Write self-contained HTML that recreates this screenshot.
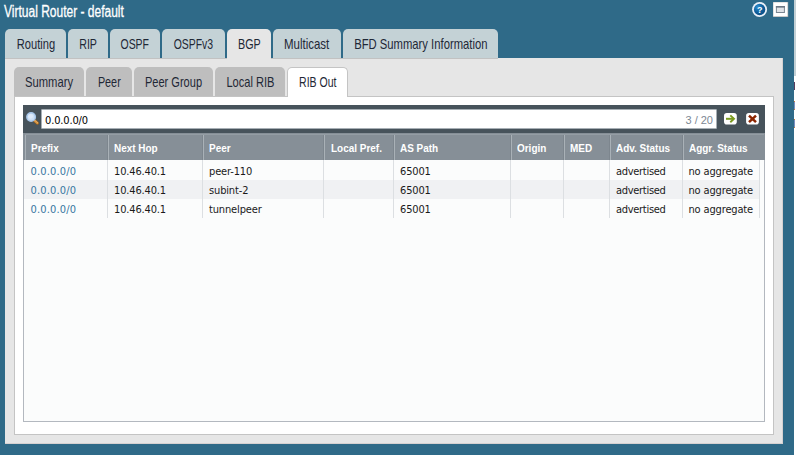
<!DOCTYPE html>
<html lang="en">
<head>
<meta charset="utf-8">
<title>Virtual Router - default</title>
<style>
html,body{margin:0;padding:0;}
body{width:796px;height:455px;overflow:hidden;background:#2f6a88;position:relative;font-family:"Liberation Sans",sans-serif;}
.abs{position:absolute;}
.cond{display:inline-block;transform-origin:0 50%;white-space:nowrap;}
#title{left:4px;top:1.6px;height:20px;line-height:20px;color:#fff;font-size:16px;}
#title .cond{transform:scaleX(.75);-webkit-text-stroke:.3px #fff;}
#strip{left:794px;top:0;width:2px;height:455px;background:linear-gradient(#c3d0d5,#c3d0d5 76px,#fff 76px);}
.mk{left:794px;width:1px;}
.otab{top:29px;height:29px;background:#c4d2d6;border-radius:5px 5px 0 0;color:#1f2836;font-size:14.5px;line-height:30px;text-align:center;}
.otab.on{background:#e6e6e6;}
.otab,.itab{display:flex;justify-content:center;}
.otab .cond,.itab .cond{flex:none;transform-origin:50% 50%;transform:scaleX(.83);}
#outer{left:5px;top:58px;width:778px;height:386px;background:#e6e6e6;box-shadow:inset -1px -1px 0 #d6d1d1;}
.itab{top:67px;height:29px;background:#bebebe;border-radius:5px 5px 0 0;color:#1f2836;font-size:14.5px;line-height:30px;text-align:center;}
.itab.on{background:#fff;border:1px solid #c4c4c4;border-bottom:none;box-sizing:border-box;height:30px;line-height:28px;}
#white{left:14px;top:96px;width:760px;height:339px;background:#fff;border:1px solid #c4c4c4;box-sizing:border-box;}
#grid{left:23px;top:105px;width:742px;height:317px;background:#fbfcfc;border:1px solid #b3b8bf;box-sizing:border-box;}
#sbar{left:23px;top:105px;width:742px;height:28px;background:#47535b;}
#sin{left:41px;top:109px;width:676px;height:20px;box-sizing:border-box;border:1px solid #a7afb5;background:#fff;border-radius:1px;font-family:"DejaVu Sans Condensed","Liberation Sans",sans-serif;font-size:11px;line-height:21px;color:#000;letter-spacing:-.15px;}
#sin span{top:0}
#hdr{left:23px;top:133px;width:742px;height:27px;background:#868f97;}
.hc{top:133px;height:27px;line-height:30px;color:#fff;font-weight:bold;font-family:"Liberation Sans",sans-serif;font-size:11px;white-space:nowrap;transform:scaleX(.905);transform-origin:0 50%;}
.hs{top:135px;width:1px;height:25px;background:#a9b1b7;box-shadow:-1px 0 0 #7d868e;}
.ht{top:134px;height:1px;background:#949da4;}
.row{left:24px;width:735px;height:19px;}
.row.alt{background:#f0f1f3;}
.c{height:19px;line-height:21px;font-family:"DejaVu Sans Condensed","Liberation Sans",sans-serif;font-size:11px;color:#1a1a1a;white-space:nowrap;letter-spacing:-.15px;}
.c.lnk{color:#3877a1;letter-spacing:.15px;margin-left:-.5px}
.c.adv{letter-spacing:-.3px}
.vs{top:160px;width:1px;height:58px;background:#dcdfe2;}
</style>
</head>
<body>
<div id="title" class="abs"><span class="cond">Virtual Router - default</span></div>
<div id="strip" class="abs"></div>
<div class="abs mk" style="top:82px;height:8px;background:#5a3d5c"></div><div class="abs mk" style="top:101px;height:7px;background:#7b8fc0;border-top:1px solid #c77a3a;border-bottom:1px solid #c77a3a"></div><div class="abs mk" style="top:119px;height:7px;background:#7b8fc0;border-top:1px solid #c77a3a;border-bottom:1px solid #c77a3a"></div>

<!-- top-right icons -->
<svg class="abs" style="left:751px;top:1px" width="18" height="18" viewBox="0 0 18 18"><defs><radialGradient id="hg" cx="35%" cy="30%" r="80%"><stop offset="0" stop-color="#2f8fd0"/><stop offset=".55" stop-color="#0f5f9c"/><stop offset="1" stop-color="#0a4a80"/></radialGradient></defs><circle cx="8.6" cy="8.5" r="7.5" fill="#e9f0f9"/><circle cx="8.6" cy="8.5" r="5.7" fill="url(#hg)"/><text x="8.7" y="11.9" text-anchor="middle" font-family="Liberation Sans, sans-serif" font-weight="bold" font-size="9" fill="#fff">?</text></svg>
<svg class="abs" style="left:773px;top:2px" width="16" height="16" viewBox="0 0 16 16"><rect x="0" y="0" width="15.2" height="15" fill="#a3a3a3"/><rect x="0.3" y="0.3" width="14.3" height="14.1" fill="#fff"/><rect x="3.4" y="4.6" width="8" height="5.9" fill="#dfe2e6" stroke="#7a8591" stroke-width="1"/><rect x="2.9" y="4" width="9" height="1.6" fill="#6b7683"/></svg>

<!-- outer tabs -->
<div class="abs otab" style="left:5px;width:61px"><span class="cond" style="transform:scaleX(0.768)">Routing</span></div>
<div class="abs otab" style="left:68px;width:40px"><span class="cond" style="transform:scaleX(0.735)">RIP</span></div>
<div class="abs otab" style="left:110px;width:50px"><span class="cond" style="transform:scaleX(0.722)">OSPF</span></div>
<div class="abs otab" style="left:162px;width:63px"><span class="cond" style="transform:scaleX(0.721)">OSPFv3</span></div>
<div class="abs otab on" style="left:227px;width:44px"><span class="cond" style="transform:scaleX(0.741)">BGP</span></div>
<div class="abs otab" style="left:273px;width:68px"><span class="cond" style="transform:scaleX(0.792)">Multicast</span></div>
<div class="abs otab" style="left:343px;width:155px"><span class="cond" style="transform:scaleX(0.776)">BFD Summary Information</span></div>

<div id="outer" class="abs"></div>
<div class="abs" style="left:5px;top:58px;width:222px;height:1px;background:#c2c2c2"></div><div class="abs" style="left:271px;top:58px;width:227px;height:1px;background:#c2c2c2"></div>

<!-- inner tabs -->
<div class="abs itab" style="left:14px;width:70px"><span class="cond" style="transform:scaleX(0.773)">Summary</span></div>
<div class="abs itab" style="left:86px;width:46px"><span class="cond" style="transform:scaleX(0.745)">Peer</span></div>
<div class="abs itab" style="left:134px;width:79px"><span class="cond" style="transform:scaleX(0.762)">Peer Group</span></div>
<div class="abs itab" style="left:215px;width:70px"><span class="cond" style="transform:scaleX(0.765)">Local RIB</span></div>
<div id="white" class="abs"></div>
<div class="abs itab on" style="left:287px;width:61px"><span class="cond" style="transform:scaleX(0.726)">RIB Out</span></div>

<div id="grid" class="abs"></div>
<div id="sbar" class="abs"></div>
<div id="sin" class="abs"><span style="position:absolute;left:3px">0.0.0.0/0</span><span style="position:absolute;right:3px;color:#7d8893;font-family:'Liberation Sans',sans-serif;letter-spacing:0">3 / 20</span></div>
<!-- magnifier -->
<svg class="abs" style="left:25px;top:110px" width="16" height="18" viewBox="0 0 16 18"><line x1="9.6" y1="10.6" x2="12.4" y2="13.1" stroke="#8a5a1e" stroke-width="3.2" stroke-linecap="round"/><line x1="9.6" y1="10.6" x2="12.4" y2="13.1" stroke="#d28f3c" stroke-width="2.2" stroke-linecap="round"/><line x1="10.2" y1="10.6" x2="12.6" y2="12.7" stroke="#eab873" stroke-width=".8" stroke-linecap="round"/><circle cx="6.1" cy="7" r="4.3" fill="#cde0f6" stroke="#a6c6ea" stroke-width="1.4"/><circle cx="5.6" cy="6.3" r="2.4" fill="#ddeafa"/></svg>
<!-- go / clear icons -->
<svg class="abs" style="left:724px;top:113px" width="13" height="12" viewBox="0 0 13 12"><rect x="0" y="0.1" width="12.8" height="11.5" rx="2.8" fill="#fff"/><path d="M2 5.8h7.6" fill="none" stroke="#7b9b1f" stroke-width="2"/><path d="M6.3 2.4L10 5.8L6.3 9.2" fill="none" stroke="#7b9b1f" stroke-width="1.9"/></svg>
<svg class="abs" style="left:746px;top:113px" width="13" height="12" viewBox="0 0 13 12"><rect x="0.1" y="0.1" width="12.8" height="11.5" rx="2.8" fill="#fff"/><path d="M3 2.6l7 6.6M10 2.6l-7 6.6" fill="none" stroke="#8b2500" stroke-width="2.5"/></svg>

<div id="hdr" class="abs"></div>
<div class="abs ht" style="left:25px;width:739px"></div>
<div class="abs hs" style="left:25px;box-shadow:none"></div>
<div class="abs hs" style="left:108px"></div>
<div class="abs hs" style="left:203px"></div>
<div class="abs hs" style="left:324px"></div>
<div class="abs hs" style="left:394px"></div>
<div class="abs hs" style="left:511px"></div>
<div class="abs hs" style="left:564px"></div>
<div class="abs hs" style="left:610px"></div>
<div class="abs hs" style="left:683px"></div>
<div class="abs hc" style="left:31px">Prefix</div>
<div class="abs hc" style="left:114px">Next Hop</div>
<div class="abs hc" style="left:209px">Peer</div>
<div class="abs hc" style="left:330.5px">Local Pref.</div>
<div class="abs hc" style="left:400px">AS Path</div>
<div class="abs hc" style="left:517px">Origin</div>
<div class="abs hc" style="left:569.5px">MED</div>
<div class="abs hc" style="left:615.5px">Adv. Status</div>
<div class="abs hc" style="left:688.5px">Aggr. Status</div>

<div class="abs row" style="top:161px"></div>
<div class="abs row alt" style="top:180px"></div>
<div class="abs row" style="top:199px"></div>

<div class="abs vs" style="left:107px"></div>
<div class="abs vs" style="left:202px"></div>
<div class="abs vs" style="left:323px"></div>
<div class="abs vs" style="left:393px"></div>
<div class="abs vs" style="left:510px"></div>
<div class="abs vs" style="left:563px"></div>
<div class="abs vs" style="left:609px"></div>
<div class="abs vs" style="left:682px"></div>
<div class="abs vs" style="left:759px"></div>

<div class="abs c lnk" style="left:31px;top:161px">0.0.0.0/0</div>
<div class="abs c" style="left:114px;top:161px">10.46.40.1</div>
<div class="abs c" style="left:209px;top:161px">peer-110</div>
<div class="abs c" style="left:400px;top:161px">65001</div>
<div class="abs c adv" style="left:616px;top:161px">advertised</div>
<div class="abs c" style="left:688.5px;top:161px">no aggregate</div>

<div class="abs c lnk" style="left:31px;top:180px">0.0.0.0/0</div>
<div class="abs c" style="left:114px;top:180px">10.46.40.1</div>
<div class="abs c" style="left:209px;top:180px">subint-2</div>
<div class="abs c" style="left:400px;top:180px">65001</div>
<div class="abs c adv" style="left:616px;top:180px">advertised</div>
<div class="abs c" style="left:688.5px;top:180px">no aggregate</div>

<div class="abs c lnk" style="left:31px;top:199px">0.0.0.0/0</div>
<div class="abs c" style="left:114px;top:199px">10.46.40.1</div>
<div class="abs c" style="left:209px;top:199px">tunnelpeer</div>
<div class="abs c" style="left:400px;top:199px">65001</div>
<div class="abs c adv" style="left:616px;top:199px">advertised</div>
<div class="abs c" style="left:688.5px;top:199px">no aggregate</div>
</body>
</html>
